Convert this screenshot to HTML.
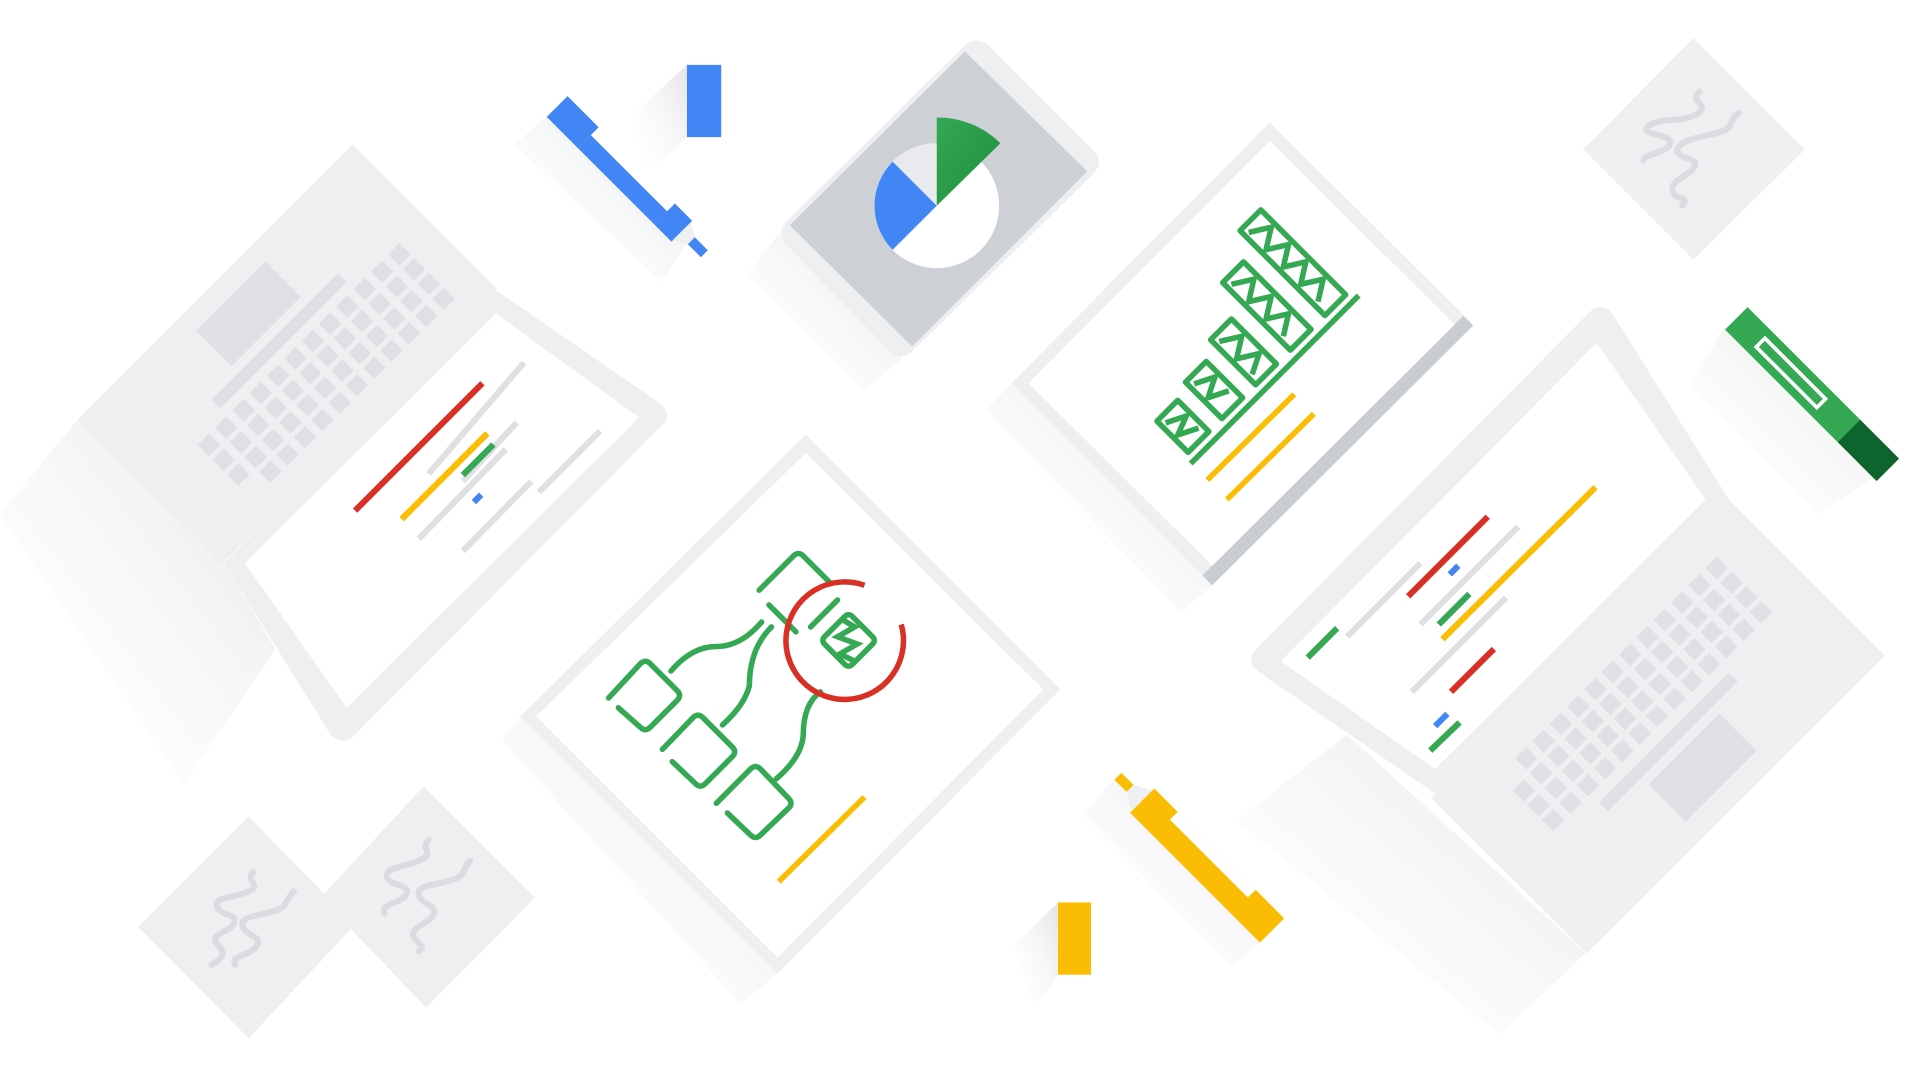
<!DOCTYPE html>
<html><head><meta charset="utf-8"><style>html,body{margin:0;padding:0;background:#fff;width:1920px;height:1080px;overflow:hidden}svg{display:block}</style></head>
<body>
<svg width="1920" height="1080" viewBox="0 0 1568 882" preserveAspectRatio="none" xmlns="http://www.w3.org/2000/svg">
<defs>
<linearGradient id="sh" x1="1" y1="0" x2="0" y2="1"><stop offset="0" stop-color="#e3e4e6"/><stop offset="1" stop-color="#fff" stop-opacity="0"/></linearGradient>
<linearGradient id="gp" x1="0" y1="0" x2="1" y2="1"><stop offset="0" stop-color="#34a853"/><stop offset="1" stop-color="#1e8e3e"/></linearGradient>
</defs>
<!-- shadows -->
<polygon points="63,343 183,460 225,530 150,640 0,420" fill="url(#sh)"/>
<polygon points="636,191 737,292 705,320 610,225" fill="url(#sh)"/>
<polygon points="826,313 990,478 965,500 805,335" fill="url(#sh)"/>
<polygon points="425,585 635,795 605,820 410,605" fill="url(#sh)"/>
<polygon points="1100,600 1295,778 1225,845 1010,670" fill="url(#sh)"/>
<polygon points="446,95 560,200 540,230 420,118" fill="url(#sh)"/>
<polygon points="561,53 561,112 530,140 515,95" fill="url(#sh)"/>
<polygon points="1408,268 1530,390 1485,420 1380,315" fill="url(#sh)"/>
<polygon points="913,632 1040,760 1005,790 885,665" fill="url(#sh)"/>
<polygon points="864,737 864,796 845,825 828,772" fill="url(#sh)"/>

<!-- paper diamonds -->
<polygon points="1383,31 1474,122 1383,212 1293,122" fill="#eeeff1"/>
<polygon points="203,667 290,755 203,848 113,757" fill="#eeeff1"/>
<polygon points="346,642 437,733 348,823 262,733" fill="#eeeff1"/>
<g fill="none" stroke="#dadce0" stroke-width="5" stroke-linecap="round">
<path d="M1388,75 c-10,8 10,10 -2,18 c-12,8 -30,2 -40,10 c-8,8 20,6 18,14 c-2,8 -20,8 -22,14"/>
<path d="M1420,92 c-10,8 -2,12 -16,16 c-14,4 -32,6 -34,14 c-2,8 18,6 14,14 c-4,8 -20,10 -18,20 c2,8 14,4 8,12"/>
<path d="M207,712 c-8,8 8,10 -4,16 c-12,6 -28,4 -26,12 c2,8 18,6 14,14 c-4,8 -20,8 -14,16 c6,8 8,10 -4,18"/>
<path d="M240,728 c-8,8 -4,12 -16,16 c-12,4 -28,4 -26,12 c2,8 16,8 12,16 c-4,8 -22,8 -18,16"/>
<path d="M350,686 c-8,8 6,10 -6,16 c-12,6 -30,6 -28,14 c2,8 20,6 16,14 c-4,8 -22,8 -18,16"/>
<path d="M384,703 c-8,8 -2,12 -16,16 c-14,4 -28,4 -26,12 c2,8 16,8 12,16 c-4,8 -20,10 -16,18 c4,8 10,6 4,12"/>
</g>

<!-- left laptop base -->
<g transform="translate(288,118) rotate(45)">
<rect x="0" y="0" width="167" height="318" fill="#eeeff1"/>
<rect x="17" y="118" width="41" height="80" fill="#dfe0e3"/>
<rect x="66" y="83" width="10" height="146" fill="#dfe0e3"/>
<g fill="#dfe0e3">
<rect x="84" y="30" width="13" height="13"/><rect x="101" y="30" width="13" height="13"/><rect x="118" y="30" width="13" height="13"/><rect x="135" y="30" width="13" height="13"/>
<rect x="84" y="50" width="13" height="13"/><rect x="101" y="50" width="13" height="13"/><rect x="118" y="50" width="13" height="13"/><rect x="135" y="50" width="13" height="13"/>
<rect x="84" y="70" width="13" height="13"/><rect x="101" y="70" width="13" height="13"/><rect x="118" y="70" width="13" height="13"/><rect x="135" y="70" width="13" height="13"/>
<rect x="84" y="90" width="13" height="13"/><rect x="101" y="90" width="13" height="13"/><rect x="118" y="90" width="13" height="13"/><rect x="135" y="90" width="13" height="13"/>
<rect x="84" y="110" width="13" height="13"/><rect x="101" y="110" width="13" height="13"/><rect x="118" y="110" width="13" height="13"/><rect x="135" y="110" width="13" height="13"/>
<rect x="84" y="130" width="13" height="13"/><rect x="101" y="130" width="13" height="13"/><rect x="118" y="130" width="13" height="13"/><rect x="135" y="130" width="13" height="13"/>
<rect x="84" y="150" width="13" height="13"/><rect x="101" y="150" width="13" height="13"/><rect x="118" y="150" width="13" height="13"/><rect x="135" y="150" width="13" height="13"/>
<rect x="84" y="170" width="13" height="13"/><rect x="101" y="170" width="13" height="13"/><rect x="118" y="170" width="13" height="13"/><rect x="135" y="170" width="13" height="13"/>
<rect x="84" y="190" width="13" height="13"/><rect x="101" y="190" width="13" height="13"/><rect x="118" y="190" width="13" height="13"/><rect x="135" y="190" width="13" height="13"/>
<rect x="84" y="210" width="13" height="13"/><rect x="101" y="210" width="13" height="13"/><rect x="118" y="210" width="13" height="13"/><rect x="135" y="210" width="13" height="13"/>
<rect x="84" y="230" width="13" height="13"/><rect x="101" y="230" width="13" height="13"/><rect x="118" y="230" width="13" height="13"/><rect x="135" y="230" width="13" height="13"/>
<rect x="84" y="250" width="13" height="13"/><rect x="101" y="250" width="13" height="13"/><rect x="118" y="250" width="13" height="13"/>
</g>
</g>
<!-- left laptop screen -->
<path d="M405,237 L540,330 Q550,340 540,348 L290,600 Q280,610 270,600 L183,460 Z" fill="#eeeff1"/>
<polygon points="405,256 522,341 283,578 200,460" fill="#fff"/>
<g stroke-width="5" stroke-linecap="butt">
<line x1="350" y1="387" x2="428" y2="296" stroke="#dfe0e3"/>
<line x1="378" y1="393" x2="422" y2="345" stroke="#dfe0e3"/>
<line x1="342" y1="440" x2="413" y2="367" stroke="#dfe0e3"/>
<line x1="378" y1="450" x2="434" y2="393" stroke="#dfe0e3"/>
<line x1="440" y1="402" x2="490" y2="352" stroke="#dfe0e3"/>
<line x1="290" y1="417" x2="394" y2="313" stroke="#d93025"/>
<line x1="328" y1="424" x2="398" y2="354" stroke="#fbbc04"/>
<line x1="378" y1="388" x2="403" y2="363" stroke="#34a853"/>
<line x1="387" y1="410" x2="393" y2="404" stroke="#4285f4"/>
</g>

<!-- pie tablet -->
<path d="M787,38 Q797,28 808,38 L893,123 Q902,132 893,142 L745,287 Q736,295 727,287 L642,200 Q634,190 642,181 Z" fill="#eeeff1"/>
<polygon points="788,42 888,140 745,283 645,184" fill="#cdd0d4"/>
<circle cx="765" cy="168" r="51" fill="#fff"/>
<path d="M765,168 L729,132 A51,51 0 0 1 765,117 Z" fill="#e8eaed"/>
<path d="M765,168 L729,132 A51,51 0 0 0 729,204 Z" fill="#4285f4"/>
<path d="M765,168 L765,96 A72,72 0 0 1 817,117 Z" fill="url(#gp)"/>

<!-- top right doc -->
<polygon points="1037,100 1203,265 990,478 826,313" fill="#eeeff1"/>
<polygon points="1195,258 1203,266 990,478 982,470" fill="#c9ccd0"/>
<polygon points="1037,115 1188,265 990,462 840,313" fill="#fff"/>
<g transform="translate(1041,310) rotate(-45)" fill="none" stroke="#34a853" stroke-width="4.5" stroke-linejoin="round">
<line x1="-97" y1="0" x2="97" y2="0"/>
<rect x="-92" y="-44" width="24" height="36"/><path d="M-88,-38 L-72,-30 L-88,-24 L-72,-16"/>
<rect x="-53" y="-50" width="24" height="42"/><path d="M-49,-44 L-33,-36 L-49,-28 L-33,-20"/>
<rect x="-14" y="-60" width="24" height="52"/><path d="M-10,-54 L6,-44 L-10,-34 L6,-24 L-10,-16"/>
<rect x="26" y="-86" width="24" height="78"/><path d="M30,-80 L46,-70 L30,-60 L46,-50 L30,-40 L46,-30 L30,-20"/>
<rect x="66" y="-106" width="24" height="98"/><path d="M70,-100 L86,-90 L70,-80 L86,-70 L70,-60 L86,-50 L70,-40 L86,-30 L70,-20"/>
</g>
<g stroke="#fbbc04" stroke-width="4.5"><line x1="986" y1="392" x2="1057" y2="322"/><line x1="1002" y1="408" x2="1073" y2="338"/></g>

<!-- center doc -->
<polygon points="658,355 866,563 635,795 425,585" fill="#eeeff1"/>
<polygon points="658,370 852,563 635,782 438,585" fill="#fff"/>
<g fill="none" stroke="#34a853" stroke-width="4.5" stroke-linecap="round">
<path d="M620,482 L648,454 Q652,450 656,454 L678,476"/>
<path d="M628,494 L650,516"/>
<path d="M684,490 L662,512"/>
<path d="M497,570 L523,542 Q527,538 531,542 L553,564 Q557,568 553,572 L531,594 Q527,598 523,594 L505,578"/>
<path d="M541,612 L566,586 Q570,582 574,586 L598,610 Q602,614 598,618 L576,640 Q572,644 568,640 L549,622"/>
<path d="M585,656 L613,628 Q617,624 621,628 L644,652 Q648,656 644,660 L621,682 Q617,686 613,682 L594,664"/>
<rect x="677" y="507" width="32" height="32" rx="4" transform="rotate(45 693 523)"/>
<path d="M688,506 l10,6 l-14,8 l16,6 l-14,8 l12,6"/>
<path d="M548,548 Q565,528 585,528 Q605,528 622,508"/>
<path d="M590,592 Q608,576 612,560 Q612,530 630,512"/>
<path d="M634,636 Q655,618 656,600 Q656,575 670,565"/>
</g>
<path d="M736,510 A48,48 0 1 1 706,478" fill="none" stroke="#d93025" stroke-width="4.5"/>
<line x1="636" y1="720" x2="706" y2="651" stroke="#fbbc04" stroke-width="4.5"/>

<!-- right laptop base -->
<g transform="translate(1412,408) rotate(45)">
<rect x="0" y="0" width="180" height="344" fill="#eeeff1"/>
<rect x="118" y="129" width="43" height="82" fill="#dfe0e3"/>
<rect x="100" y="100" width="10" height="150" fill="#dfe0e3"/>
<g fill="#dfe0e3">
<rect x="26" y="40" width="13" height="13"/><rect x="43" y="40" width="13" height="13"/><rect x="60" y="40" width="13" height="13"/><rect x="77" y="40" width="13" height="13"/>
<rect x="26" y="60" width="13" height="13"/><rect x="43" y="60" width="13" height="13"/><rect x="60" y="60" width="13" height="13"/><rect x="77" y="60" width="13" height="13"/>
<rect x="26" y="80" width="13" height="13"/><rect x="43" y="80" width="13" height="13"/><rect x="60" y="80" width="13" height="13"/><rect x="77" y="80" width="13" height="13"/>
<rect x="26" y="100" width="13" height="13"/><rect x="43" y="100" width="13" height="13"/><rect x="60" y="100" width="13" height="13"/><rect x="77" y="100" width="13" height="13"/>
<rect x="26" y="120" width="13" height="13"/><rect x="43" y="120" width="13" height="13"/><rect x="60" y="120" width="13" height="13"/><rect x="77" y="120" width="13" height="13"/>
<rect x="26" y="140" width="13" height="13"/><rect x="43" y="140" width="13" height="13"/><rect x="60" y="140" width="13" height="13"/><rect x="77" y="140" width="13" height="13"/>
<rect x="26" y="160" width="13" height="13"/><rect x="43" y="160" width="13" height="13"/><rect x="60" y="160" width="13" height="13"/><rect x="77" y="160" width="13" height="13"/>
<rect x="26" y="180" width="13" height="13"/><rect x="43" y="180" width="13" height="13"/><rect x="60" y="180" width="13" height="13"/><rect x="77" y="180" width="13" height="13"/>
<rect x="26" y="200" width="13" height="13"/><rect x="43" y="200" width="13" height="13"/><rect x="60" y="200" width="13" height="13"/><rect x="77" y="200" width="13" height="13"/>
<rect x="26" y="220" width="13" height="13"/><rect x="43" y="220" width="13" height="13"/><rect x="60" y="220" width="13" height="13"/><rect x="77" y="220" width="13" height="13"/>
<rect x="26" y="240" width="13" height="13"/><rect x="43" y="240" width="13" height="13"/><rect x="60" y="240" width="13" height="13"/><rect x="77" y="240" width="13" height="13"/>
<rect x="26" y="260" width="13" height="13"/><rect x="43" y="260" width="13" height="13"/><rect x="60" y="260" width="13" height="13"/><rect x="77" y="260" width="13" height="13"/>
<rect x="43" y="280" width="13" height="13"/><rect x="60" y="280" width="13" height="13"/><rect x="77" y="280" width="13" height="13"/>
</g>
</g>
<!-- right laptop screen -->
<path d="M1298,255 Q1307,246 1316,255 L1412,408 L1172,648 L1027,548 Q1017,540 1026,530 Z" fill="#eeeff1"/>
<polygon points="1304,280 1393,408 1172,628 1046,540" fill="#fff"/>
<g stroke-width="5">
<line x1="1160" y1="510" x2="1240" y2="430" stroke="#dfe0e3"/>
<line x1="1100" y1="520" x2="1160" y2="460" stroke="#dfe0e3"/>
<line x1="1153" y1="565" x2="1230" y2="488" stroke="#dfe0e3"/>
<line x1="1150" y1="487" x2="1215" y2="422" stroke="#d93025"/>
<line x1="1175" y1="510" x2="1200" y2="485" stroke="#34a853"/>
<line x1="1178" y1="522" x2="1303" y2="398" stroke="#fbbc04"/>
<line x1="1068" y1="537" x2="1092" y2="513" stroke="#34a853"/>
<line x1="1185" y1="565" x2="1220" y2="530" stroke="#d93025"/>
<line x1="1172" y1="593" x2="1182" y2="583" stroke="#4285f4"/>
<line x1="1168" y1="613" x2="1192" y2="590" stroke="#34a853"/>
<line x1="1184" y1="469" x2="1191" y2="462" stroke="#4285f4"/>
</g>

<!-- blue marker -->
<rect x="561" y="53" width="28" height="59" fill="#4285f4"/>
<g transform="translate(455,87) rotate(45)">
<rect x="0" y="-12" width="36" height="24" fill="#4285f4"/>
<rect x="36" y="-3" width="88" height="15" fill="#4285f4"/>
<rect x="124" y="-12" width="20" height="24" fill="#4285f4"/>
<polygon points="144,-10 156,-4 156,4 144,10" fill="#eeeff1"/>
<rect x="155" y="-4" width="15" height="8" fill="#4285f4"/>
</g>
<!-- green marker -->
<g transform="translate(1418,260) rotate(45)">
<rect x="0" y="-13" width="130" height="26" fill="#34a853"/>
<rect x="130" y="-13" width="45" height="26" fill="#0d652d"/>
<rect x="28" y="-5" width="70" height="10" fill="none" stroke="#fff" stroke-width="3"/>
</g>
<!-- yellow marker -->
<rect x="864" y="737" width="27" height="59" fill="#fbbc04"/>
<g transform="translate(913,634) rotate(45)">
<rect x="0" y="-4" width="16" height="8" fill="#fbbc04"/>
<polygon points="14,-4 28,-12 28,12 14,4" fill="#eeeff1"/>
<rect x="28" y="-14" width="150" height="28" fill="#fbbc04"/>
<rect x="55" y="-14" width="90" height="9" fill="#fff"/>
</g>
</svg>
</body></html>
